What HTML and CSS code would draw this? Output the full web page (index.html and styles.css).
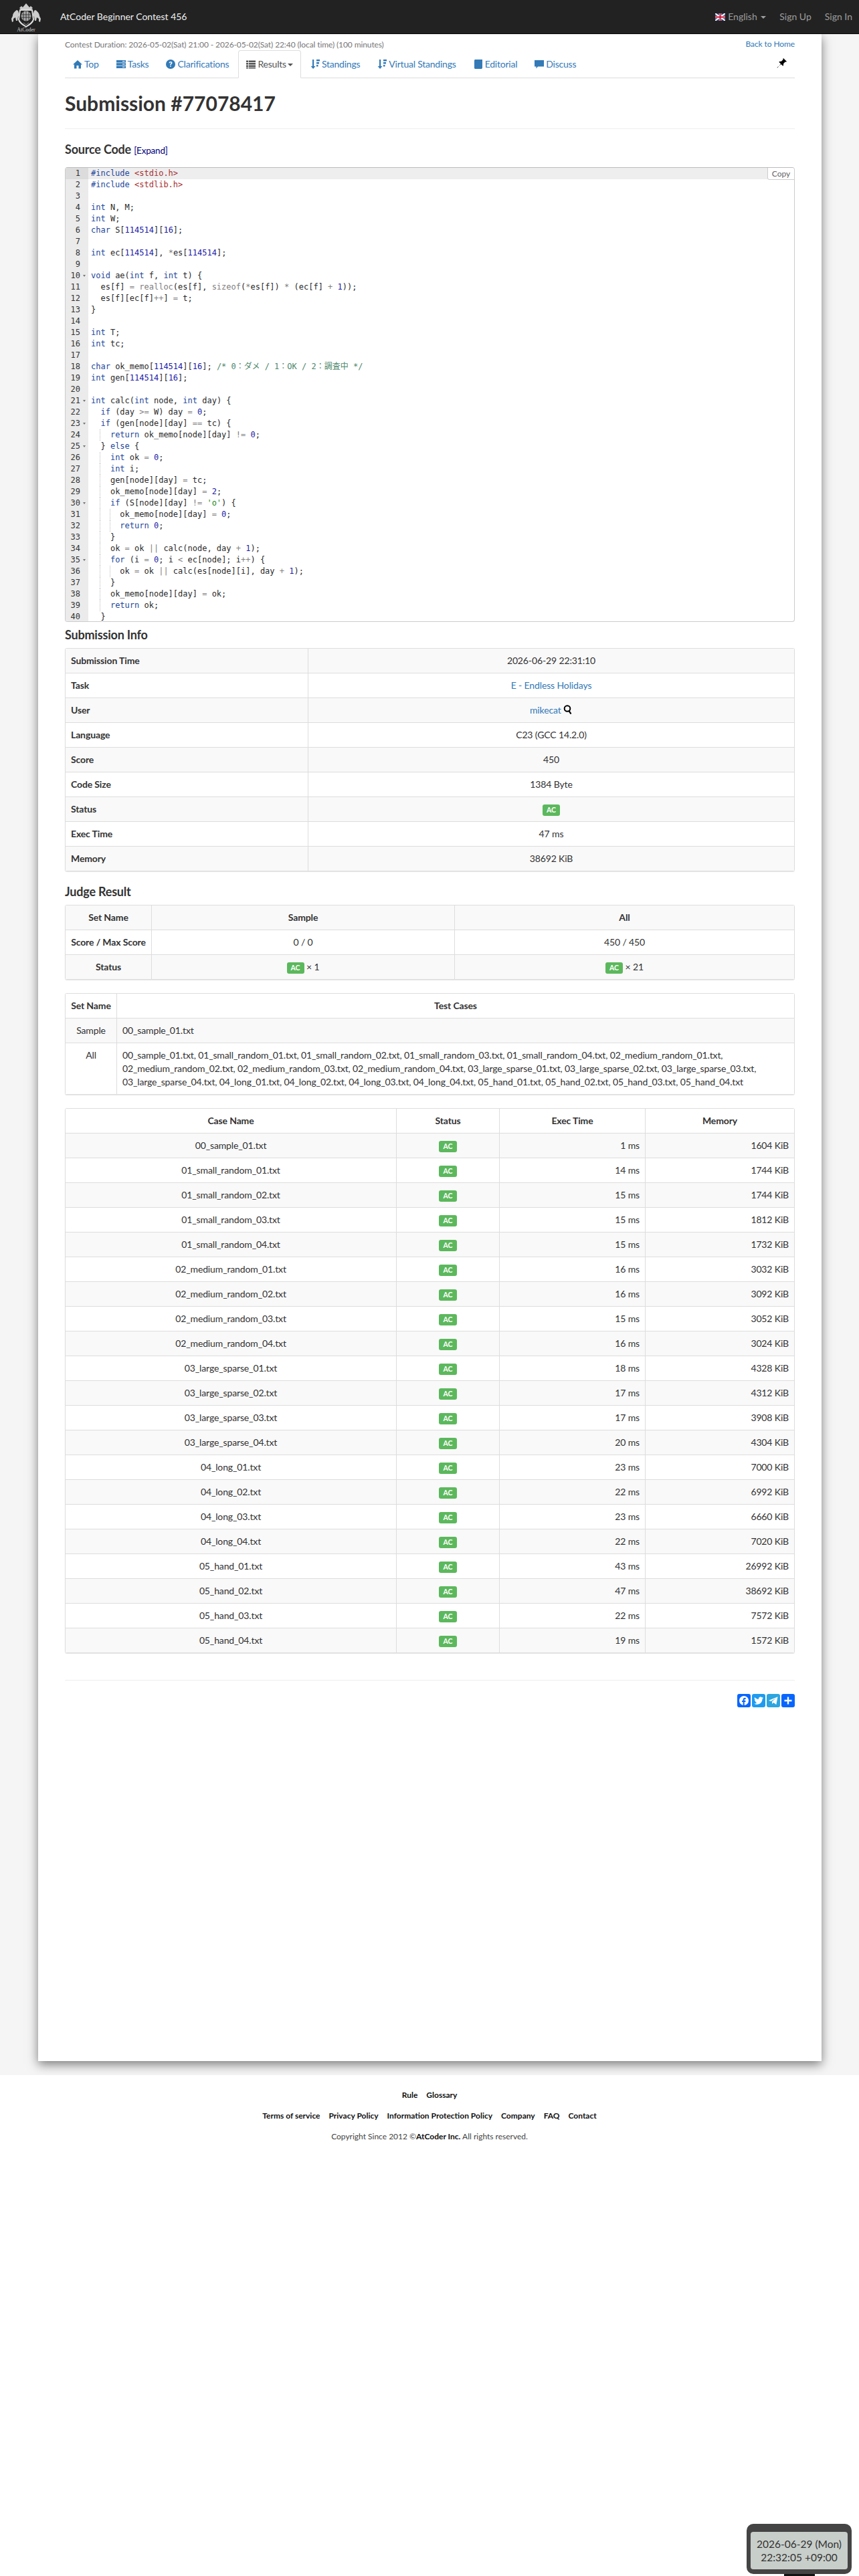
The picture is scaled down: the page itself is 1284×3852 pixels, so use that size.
FILE: index.html
```html
<!DOCTYPE html>
<html lang="en">
<head>
    <meta charset="UTF-8">
    <meta name="viewport" content="width=device-width, initial-scale=1.0">
    <title>Submission #77078417 - AtCoder Beginner Contest 456</title>
    <link rel="stylesheet" href="styles.css">
</head>
<body>
    <nav class="navbar">
        <a class="brand-logo" href="#">
            <svg width="52" height="48" viewBox="0 0 52 48">
                <path d="M16 11l3-3 2 2 5-6 5 6 2-2 3 3-3 3H19z" fill="#ccc"/>
                <path d="M17 14h18l2 14c-1 5-6 8-11 11-5-3-10-6-11-11z" fill="#222" stroke="#ddd" stroke-width="2"/>
                <circle cx="26" cy="23" r="7.5" fill="#aaa"/>
                <path d="M19 21h14M19 25h14M26 15.500v15M22 16.500v13M30 16.500v13" stroke="#222" stroke-width=".8" fill="none"/>
                <path d="M22 33l4 3 4-3" stroke="#888" fill="none"/>
                <path d="M12 14c-3 2-6 5-6 9l-2 4 1 5 2-1 0-4 3-2 1 5 2 0 1-6 2-2-2-7z" fill="#ccc"/>
                <path d="M40 14c3 2 6 5 6 9l2 4-1 5-2-1 0-4-3-2-1 5-2 0-1-6-2-2 2-7z" fill="#ccc"/>
                <text x="26" y="46" class="logo-text" text-anchor="middle">AtCoder</text>
            </svg>
        </a>
        <a class="contest-title" href="#">AtCoder Beginner Contest 456</a>
        <ul class="nav-right">
            <li>
                <svg class="flag" width="15" height="11" viewBox="0 0 15 11">
                    <rect width="15" height="11" fill="#2a3b7c"/>
                    <path d="M0 0l15 11M15 0L0 11" stroke="#fff" stroke-width="2"/>
                    <path d="M7.500 0v11M0 5.500h15" stroke="#fff" stroke-width="3.500"/>
                    <path d="M7.500 0v11M0 5.500h15" stroke="#c8102e" stroke-width="2"/>
                </svg>
                English <span class="caret"></span>
            </li>
            <li>Sign Up</li>
            <li>Sign In</li>
        </ul>
    </nav>

    <div class="page-wrap">
        <main class="container">
            <div class="top-line">
                <a class="back-home" href="#">Back to Home</a>
                <small class="duration">Contest Duration: 2026-05-02(Sat) 21:00 - 2026-05-02(Sat) 22:40 (local time) (100 minutes)</small>
            </div>

            <ul class="nav-tabs">
                <li><a href="#"><svg class="ico" viewBox="0 0 14 14"><path d="M7 1L0 7.600h2V13.500h3.500V9h3v4.500H12V7.600h2z"/></svg>Top</a></li>
                <li><a href="#"><svg class="ico" viewBox="0 0 14 14"><path d="M0 1h14v3.500H0zM0 5.300h14v3.400H0zM0 9.500h14V13H0z"/><path d="M9 2.700h3.500M9 7h3.500M9 11.200h3.500" stroke="#fff"/></svg>Tasks</a></li>
                <li><a href="#"><svg class="ico" viewBox="0 0 14 14"><circle cx="7" cy="7" r="7"/><path d="M4.600 5.200C4.700 3.800 5.800 3 7.100 3c1.400 0 2.400.9 2.400 2.100 0 1.800-1.800 1.700-1.800 3.200H6.100c0-2.200 1.700-2.100 1.700-3.200 0-.5-.3-.8-.8-.8-.5 0-.8.400-.9.900zM6.100 9.200h1.600v1.600H6.100z" fill="#fff"/></svg>Clarifications</a></li>
                <li class="active"><a href="#"><svg class="ico" viewBox="0 0 14 14"><path d="M0 1.500h3v2.500H0zM3.800 1.500H14v2.500H3.800zM0 5h3v2.500H0zM3.800 5H14v2.500H3.800zM0 8.500h3V11H0zM3.800 8.500H14V11H3.800zM0 11.800h3v1.700H0zM3.800 11.800H14v1.700H3.800z"/></svg>Results<span class="caret"></span></a></li>
                <li><a href="#"><svg class="ico" viewBox="0 0 14 14"><path d="M3 0h2.200v10H7.500l-3.400 4L.7 10H3zM9 0h5v2.500H9zM9 4h4v2.500H9zM9 8h2.500v2.500H9z"/></svg>Standings</a></li>
                <li><a href="#"><svg class="ico" viewBox="0 0 14 14"><path d="M3 0h2.200v10H7.500l-3.400 4L.7 10H3zM9 0h5v2.500H9zM9 4h4v2.500H9zM9 8h2.500v2.500H9z"/></svg>Virtual Standings</a></li>
                <li><a href="#"><svg class="ico" viewBox="0 0 14 14"><path d="M2.500 0H13v12.500l-1 1.500H2.500c-1 0-1.500-.7-1.500-1.500v-11C1 .7 1.500 0 2.500 0z"/></svg>Editorial</a></li>
                <li><a href="#"><svg class="ico" viewBox="0 0 14 14"><path d="M0 1h14v9.500H5L2.500 13.500V10.500H0z"/></svg>Discuss</a></li>
                <li class="pin">
                    <svg width="16" height="16" viewBox="0 0 16 16"><path d="M10 0l5 5-1.300.8-.8-.5-3 3.200c.5 1.300.2 2.300-.6 3.200L6 8.400 1 14.500l-.5-.5L6.600 9 3.300 5.700c.9-.8 1.900-1.100 3.200-.6l3.200-3-.5-.8z" fill="#000"/></svg>
                </li>
            </ul>

            <h1 class="page-title">Submission #77078417</h1>
            <hr>

            <h3 class="section-title">Source Code <a class="expand" href="#">[Expand]</a></h3>
            <div class="code-box">
                <button class="copy-btn">Copy</button>
                <div class="gutter">
                    <div class="active-num">1</div><div>2</div><div>3</div><div>4</div><div>5</div><div>6</div><div>7</div><div>8</div><div>9</div>
                    <div class="fold">10</div><div>11</div><div>12</div><div>13</div><div>14</div><div>15</div><div>16</div><div>17</div><div>18</div><div>19</div><div>20</div>
                    <div class="fold">21</div><div>22</div><div class="fold">23</div><div>24</div><div class="fold">25</div><div>26</div><div>27</div><div>28</div><div>29</div>
                    <div class="fold">30</div><div>31</div><div>32</div><div>33</div><div>34</div><div class="fold">35</div><div>36</div><div>37</div><div>38</div><div>39</div><div>40</div>
                </div>
<pre class="code"><div class="active-line"><b>#include</b> <u>&lt;stdio.h&gt;</u></div><div><b>#include</b> <u>&lt;stdlib.h&gt;</u></div><div> </div><div><b>int</b> N, M;</div><div><b>int</b> W;</div><div><b>char</b> S[<i>114514</i>][<i>16</i>];</div><div> </div><div><b>int</b> ec[<i>114514</i>], <s>*</s>es[<i>114514</i>];</div><div> </div><div><b>void</b> ae(<b>int</b> f, <b>int</b> t) {</div><div>  es[f] <s>=</s> <s>realloc</s>(es[f], <s>sizeof</s>(<s>*</s>es[f]) <s>*</s> (ec[f] <s>+</s> <i>1</i>));</div><div>  es[f][ec[f]<s>++</s>] <s>=</s> t;</div><div>}</div><div> </div><div><b>int</b> T;</div><div><b>int</b> tc;</div><div> </div><div><b>char</b> ok_memo[<i>114514</i>][<i>16</i>]; <em>/* 0：ダメ / 1：OK / 2：調査中 */</em></div><div><b>int</b> gen[<i>114514</i>][<i>16</i>];</div><div> </div><div><b>int</b> calc(<b>int</b> node, <b>int</b> day) {</div><div>  <b>if</b> (day <s>&gt;=</s> W) day <s>=</s> <i>0</i>;</div><div>  <b>if</b> (gen[node][day] <s>==</s> tc) {</div><div><span class="guide">  </span>  <b>return</b> ok_memo[node][day] <s>!=</s> <i>0</i>;</div><div>  } <b>else</b> {</div><div><span class="guide">  </span>  <b>int</b> ok <s>=</s> <i>0</i>;</div><div><span class="guide">  </span>  <b>int</b> i;</div><div><span class="guide">  </span>  gen[node][day] <s>=</s> tc;</div><div><span class="guide">  </span>  ok_memo[node][day] <s>=</s> <i>2</i>;</div><div><span class="guide">  </span>  <b>if</b> (S[node][day] <s>!=</s> <tt>'o'</tt>) {</div><div><span class="guide">  </span><span class="guide">  </span>  ok_memo[node][day] <s>=</s> <i>0</i>;</div><div><span class="guide">  </span><span class="guide">  </span>  <b>return</b> <i>0</i>;</div><div><span class="guide">  </span>  }</div><div><span class="guide">  </span>  ok <s>=</s> ok <s>||</s> calc(node, day <s>+</s> <i>1</i>);</div><div><span class="guide">  </span>  <b>for</b> (i <s>=</s> <i>0</i>; i <s>&lt;</s> ec[node]; i<s>++</s>) {</div><div><span class="guide">  </span><span class="guide">  </span>  ok <s>=</s> ok <s>||</s> calc(es[node][i], day <s>+</s> <i>1</i>);</div><div><span class="guide">  </span>  }</div><div><span class="guide">  </span>  ok_memo[node][day] <s>=</s> ok;</div><div><span class="guide">  </span>  <b>return</b> ok;</div><div>  }</div></pre>
            </div>

            <h3 class="section-title info-title">Submission Info</h3>
            <div class="panel">
                <table class="table info-table">
                    <tr><th>Submission Time</th><td>2026-06-29 22:31:10</td></tr>
                    <tr><th>Task</th><td><a href="#">E - Endless Holidays</a></td></tr>
                    <tr><th>User</th><td><a href="#">mikecat</a> <svg class="search" width="14" height="14" viewBox="0 0 14 14"><circle cx="6" cy="5.500" r="4.300" fill="none" stroke="#000" stroke-width="2"/><path d="M8.500 9l3 4.500" stroke="#000" stroke-width="2.200"/></svg></td></tr>
                    <tr><th>Language</th><td>C23 (GCC 14.2.0)</td></tr>
                    <tr><th>Score</th><td>450</td></tr>
                    <tr><th>Code Size</th><td>1384 Byte</td></tr>
                    <tr><th>Status</th><td><span class="label">AC</span></td></tr>
                    <tr><th>Exec Time</th><td>47 ms</td></tr>
                    <tr><th>Memory</th><td>38692 KiB</td></tr>
                </table>
            </div>

            <h3 class="section-title judge-title">Judge Result</h3>
            <div class="panel">
                <table class="table judge-table">
                    <tr><th>Set Name</th><th>Sample</th><th>All</th></tr>
                    <tr><th>Score / Max Score</th><td>0 / 0</td><td>450 / 450</td></tr>
                    <tr><th>Status</th><td><span class="label">AC</span> × 1</td><td><span class="label">AC</span> × 21</td></tr>
                </table>
            </div>
            <div class="panel">
                <table class="table sets-table">
                    <thead><tr><th>Set Name</th><th>Test Cases</th></tr></thead>
                    <tbody>
                        <tr><td>Sample</td><td>00_sample_01.txt</td></tr>
                        <tr><td>All</td><td>00_sample_01.txt, 01_small_random_01.txt, 01_small_random_02.txt, 01_small_random_03.txt, 01_small_random_04.txt, 02_medium_random_01.txt, 02_medium_random_02.txt, 02_medium_random_03.txt, 02_medium_random_04.txt, 03_large_sparse_01.txt, 03_large_sparse_02.txt, 03_large_sparse_03.txt, 03_large_sparse_04.txt, 04_long_01.txt, 04_long_02.txt, 04_long_03.txt, 04_long_04.txt, 05_hand_01.txt, 05_hand_02.txt, 05_hand_03.txt, 05_hand_04.txt</td></tr>
                    </tbody>
                </table>
            </div>
            <div class="panel">
                <table class="table cases-table">
                    <thead><tr><th>Case Name</th><th>Status</th><th>Exec Time</th><th>Memory</th></tr></thead>
                    <tbody>
                        <tr><td>00_sample_01.txt</td><td><span class="label">AC</span></td><td>1 ms</td><td>1604 KiB</td></tr>
                        <tr><td>01_small_random_01.txt</td><td><span class="label">AC</span></td><td>14 ms</td><td>1744 KiB</td></tr>
                        <tr><td>01_small_random_02.txt</td><td><span class="label">AC</span></td><td>15 ms</td><td>1744 KiB</td></tr>
                        <tr><td>01_small_random_03.txt</td><td><span class="label">AC</span></td><td>15 ms</td><td>1812 KiB</td></tr>
                        <tr><td>01_small_random_04.txt</td><td><span class="label">AC</span></td><td>15 ms</td><td>1732 KiB</td></tr>
                        <tr><td>02_medium_random_01.txt</td><td><span class="label">AC</span></td><td>16 ms</td><td>3032 KiB</td></tr>
                        <tr><td>02_medium_random_02.txt</td><td><span class="label">AC</span></td><td>16 ms</td><td>3092 KiB</td></tr>
                        <tr><td>02_medium_random_03.txt</td><td><span class="label">AC</span></td><td>15 ms</td><td>3052 KiB</td></tr>
                        <tr><td>02_medium_random_04.txt</td><td><span class="label">AC</span></td><td>16 ms</td><td>3024 KiB</td></tr>
                        <tr><td>03_large_sparse_01.txt</td><td><span class="label">AC</span></td><td>18 ms</td><td>4328 KiB</td></tr>
                        <tr><td>03_large_sparse_02.txt</td><td><span class="label">AC</span></td><td>17 ms</td><td>4312 KiB</td></tr>
                        <tr><td>03_large_sparse_03.txt</td><td><span class="label">AC</span></td><td>17 ms</td><td>3908 KiB</td></tr>
                        <tr><td>03_large_sparse_04.txt</td><td><span class="label">AC</span></td><td>20 ms</td><td>4304 KiB</td></tr>
                        <tr><td>04_long_01.txt</td><td><span class="label">AC</span></td><td>23 ms</td><td>7000 KiB</td></tr>
                        <tr><td>04_long_02.txt</td><td><span class="label">AC</span></td><td>22 ms</td><td>6992 KiB</td></tr>
                        <tr><td>04_long_03.txt</td><td><span class="label">AC</span></td><td>23 ms</td><td>6660 KiB</td></tr>
                        <tr><td>04_long_04.txt</td><td><span class="label">AC</span></td><td>22 ms</td><td>7020 KiB</td></tr>
                        <tr><td>05_hand_01.txt</td><td><span class="label">AC</span></td><td>43 ms</td><td>26992 KiB</td></tr>
                        <tr><td>05_hand_02.txt</td><td><span class="label">AC</span></td><td>47 ms</td><td>38692 KiB</td></tr>
                        <tr><td>05_hand_03.txt</td><td><span class="label">AC</span></td><td>22 ms</td><td>7572 KiB</td></tr>
                        <tr><td>05_hand_04.txt</td><td><span class="label">AC</span></td><td>19 ms</td><td>1572 KiB</td></tr>
                    </tbody>
                </table>
            </div>

            <hr class="bottom-rule">

            <div class="share">
                <a class="share-btn fb" href="#"><svg width="20" height="20" viewBox="0 0 20 20"><circle cx="10" cy="10" r="7" fill="#fff"/><path d="M8.700 17v-5H7v-2h1.700V8.500c0-1.800 1-2.700 2.600-2.700l1.500.1v1.800h-1c-.8 0-1.100.5-1.100 1V10h1.900l-.3 2h-1.600v5z" fill="#0866ff"/></svg></a>
                <a class="share-btn tw" href="#"><svg width="20" height="20" viewBox="0 0 20 20"><path d="M17 5.700c-.5.200-1 .4-1.600.5.600-.4 1-.9 1.200-1.600-.5.300-1.100.6-1.800.7a2.800 2.800 0 0 0-4.800 2.600C7.700 7.800 5.600 6.700 4.200 5a2.800 2.800 0 0 0 .9 3.800c-.5 0-.9-.1-1.300-.4 0 1.400 1 2.600 2.300 2.800-.4.100-.9.100-1.300 0 .4 1.100 1.400 1.900 2.600 2a5.700 5.700 0 0 1-4.200 1.200c1.300.8 2.700 1.300 4.300 1.300 5.200 0 8.200-4.400 8-8.300.6-.4 1.100-1 1.500-1.700z" fill="#fff"/></svg></a>
                <a class="share-btn tg" href="#"><svg width="20" height="20" viewBox="0 0 20 20"><path d="M3 9.700L16.500 4.300 14.300 16l-4-3-2.100 2-.3-3.500 6-5.300-7.600 4.700z" fill="#fff"/></svg></a>
                <a class="share-btn plus" href="#"><svg width="20" height="20" viewBox="0 0 20 20"><path d="M8.800 4.500h2.400v4.300h4.300v2.400h-4.300v4.300H8.800v-4.300H4.500V8.800h4.300z" fill="#fff"/></svg></a>
            </div>
        </main>
    </div>

    <footer class="footer">
        <ul class="footer-links">
            <li><a href="#">Rule</a></li>
            <li><a href="#">Glossary</a></li>
        </ul>
        <ul class="footer-links">
            <li><a href="#">Terms of service</a></li>
            <li><a href="#">Privacy Policy</a></li>
            <li><a href="#">Information Protection Policy</a></li>
            <li><a href="#">Company</a></li>
            <li><a href="#">FAQ</a></li>
            <li><a href="#">Contact</a></li>
        </ul>
        <p class="copyright">Copyright Since 2012 ©<a href="#">AtCoder Inc.</a> All rights reserved.</p>
    </footer>

    <div class="clock">
        <div class="clock-face">2026-06-29 (Mon)<br>22:32:05 +09:00</div>
        <div class="clock-stand"></div>
    </div>
</body>
</html>
```
FILE: styles.css
```css
* {
    box-sizing: border-box;
}
body {
    position: relative;
    min-height: 3852px;
    margin: 0;
    background-color: #ffffff;
    color: #333333;
    font-family: Lato, "Noto Sans CJK JP", sans-serif;
    font-size: 14px;
    line-height: 20px;
}
a {
    color: #337ab7;
    text-decoration: none;
}
ul {
    margin: 0;
    padding: 0;
    list-style: none;
}
hr {
    margin: 18px 0 20px;
    border: none;
    border-top: 1px solid #eeeeee;
}

/* top bar */
.navbar {
    display: flex;
    align-items: center;
    height: 51px;
    padding-left: 13px;
    background-color: #222222;
    border-bottom: 1px solid #080808;
}
.brand-logo {
    display: block;
    width: 52px;
    height: 48px;
}
.logo-text {
    fill: #cccccc;
    font-family: "Liberation Serif", serif;
    font-size: 8px;
}
.contest-title {
    margin-left: 25px;
    color: #eeeeee;
}
.nav-right {
    display: flex;
    gap: 20px;
    margin-left: auto;
    padding-right: 10px;
    color: #9d9d9d;
}
.flag {
    margin-right: 1px;
    vertical-align: -1px;
}
.caret {
    display: inline-block;
    width: 0;
    height: 0;
    margin-left: 2px;
    vertical-align: middle;
    border-top: 4px solid;
    border-right: 4px solid transparent;
    border-left: 4px solid transparent;
}

/* main column */
.page-wrap {
    height: 3052px;
    background-color: #f5f5f5;
    overflow: hidden;
}
.container {
    width: 1171px;
    height: 3031px;
    margin-left: 57px;
    padding: 7px 40px 0;
    background-color: #ffffff;
    box-shadow: 0 5px 15px rgba(0, 0, 0, 0.5);
}
.top-line {
    height: 17px;
    font-size: 12px;
    line-height: 17px;
}
.duration {
    color: #777777;
    font-size: 12px;
    letter-spacing: -0.1px;
}
.back-home {
    float: right;
    margin-top: -1px;
    letter-spacing: -0.1px;
}

/* tabs */
.nav-tabs {
    display: flex;
    height: 42px;
    margin-top: 0;
    border-bottom: 1px solid #dddddd;
    letter-spacing: -0.22px;
}
.nav-tabs li {
    margin-right: 2px;
}
.nav-tabs a {
    display: block;
    height: 42px;
    padding: 11px 11px 10px;
    border: 1px solid transparent;
    border-width: 0 1px;
}
.nav-tabs a .caret {
    margin-left: 2px;
}
.nav-tabs .active a {
    padding-top: 10px;
    color: #555555;
    background-color: #ffffff;
    border: 1px solid #dddddd;
    border-bottom-color: transparent;
    border-radius: 4px 4px 0 0;
}
.nav-tabs .pin {
    margin: 12px 11px 0 auto;
}
.ico {
    width: 14px;
    height: 14px;
    margin-right: 3px;
    fill: currentColor;
    vertical-align: -2px;
}

/* headings */
.page-title {
    margin: 17px 0 0;
    font-size: 30px;
    font-weight: 700;
    line-height: 40px;
}
.section-title {
    margin: 0;
    font-size: 18px;
    font-weight: 700;
    line-height: 20px;
    letter-spacing: -0.2px;
}
.expand {
    color: #000080;
    font-size: 13.500px;
    font-weight: 400;
}

/* source code */
.code-box {
    position: relative;
    display: flex;
    height: 680px;
    margin-top: 15px;
    overflow: hidden;
    border: 1px solid #cccccc;
    border-top-color: #bbbbbb;
    border-radius: 4px;
}
.gutter {
    flex: none;
    width: 34px;
    padding-right: 12px;
    background-color: #ebebeb;
    color: #333333;
    font-family: "DejaVu Sans Mono", monospace;
    font-size: 12px;
    line-height: 17px;
    text-align: right;
}
.gutter div {
    position: relative;
    margin-right: -12px;
    padding-right: 12px;
}
.active-num {
    background-color: #dcdcdc;
}
.gutter .fold::after {
    content: "";
    position: absolute;
    top: 7px;
    right: 4px;
    border-top: 3px solid #777777;
    border-right: 2.500px solid transparent;
    border-left: 2.500px solid transparent;
}
.code {
    flex: 1;
    margin: 0;
    color: #2b2b2b;
    font-family: "DejaVu Sans Mono", "Noto Sans CJK JP", monospace;
    font-size: 12px;
    line-height: 17px;
}
.code div {
    height: 17px;
    padding-left: 4px;
}
.code .active-line {
    background-color: #eeeeee;
}
.code b {
    color: #24489c;
    font-weight: 400;
}
.code i {
    color: #1c1ca8;
    font-style: normal;
}
.code u {
    color: #a83232;
    text-decoration: none;
}
.code s {
    color: #808080;
    text-decoration: none;
}
.code em {
    color: #4c886b;
    font-style: normal;
}
.code tt {
    color: #1a8a1a;
    font-family: inherit;
}
.guide {
    display: inline-block;
    height: 17px;
    background-image: linear-gradient(#bbbbbb 50%, transparent 50%);
    background-size: 1px 2px;
    background-repeat: repeat-y;
    background-position: right top;
    vertical-align: top;
}
.copy-btn {
    position: absolute;
    top: -1px;
    right: -1px;
    z-index: 2;
    width: 41px;
    height: 19px;
    padding: 0;
    background-color: #ffffff;
    border: 1px solid #cccccc;
    border-radius: 0 3px 0 3px;
    color: #666666;
    font-family: inherit;
    font-size: 12px;
}

/* tables */
.info-title {
    margin-top: 9px;
}
.judge-title {
    margin-top: 20px;
}
.panel {
    margin: 10px 0 20px;
    overflow: hidden;
    border-radius: 3px;
    box-shadow: 0 1px 1px rgba(0, 0, 0, 0.1);
}
.panel + .panel {
    margin-top: 0;
}
.table {
    width: 100%;
    border-collapse: collapse;
    table-layout: fixed;
    letter-spacing: -0.13px;
}
.table th,
.table td {
    padding: 8px;
    border: 1px solid #dddddd;
    text-align: center;
    vertical-align: top;
    font-weight: 400;
}
.table th {
    font-weight: 700;
    white-space: nowrap;
}
.info-table tr:nth-child(odd),
.judge-table tr:nth-child(odd),
.sets-table tbody tr:nth-child(odd),
.cases-table tbody tr:nth-child(odd) {
    background-color: #f9f9f9;
}
.info-table th {
    width: 363px;
    text-align: left;
}
.judge-table th:first-child {
    width: 129px;
}
.judge-table tr:first-child th:nth-child(2) {
    width: 453px;
}
.sets-table th:first-child {
    width: 77px;
}
.sets-table td:nth-child(2) {
    text-align: left;
}
.cases-table th:nth-child(1) {
    width: 495px;
}
.cases-table th:nth-child(2) {
    width: 154px;
}
.cases-table th:nth-child(3) {
    width: 218px;
}
.cases-table td:nth-child(3),
.cases-table td:nth-child(4) {
    text-align: right;
}
.label {
    display: inline-block;
    padding: 3px 6px 4px;
    background-color: #5cb85c;
    border-radius: 3px;
    color: #ffffff;
    font-size: 10.500px;
    font-weight: 700;
    line-height: 10px;
    letter-spacing: 0;
    vertical-align: 0;
}
.search {
    vertical-align: -1px;
}

/* share buttons */
.bottom-rule {
    margin: 40px 0 20px;
}
.share {
    display: flex;
    justify-content: flex-end;
    gap: 2px;
}
.share-btn {
    display: block;
    width: 20px;
    height: 20px;
    border-radius: 3px;
}
.share-btn svg {
    display: block;
}
.fb,
.plus {
    background-color: #0866ff;
}
.tw {
    background-color: #1d9bf0;
}
.tg {
    background-color: #2ca5e0;
}

/* footer */
.footer {
    padding-top: 21px;
    font-size: 12px;
    line-height: 17px;
    text-align: center;
}
.footer-links {
    display: flex;
    justify-content: center;
    gap: 13px;
    margin-bottom: 14px;
    font-weight: 700;
}
.footer a {
    color: #111111;
}
.copyright {
    margin: 0;
    color: #444444;
}
.copyright a {
    font-weight: 700;
}

/* clock */
.clock {
    position: absolute;
    top: 3774px;
    left: 1116px;
    width: 157px;
    height: 75px;
    padding: 12px 6px 7px;
    background-color: #444444;
    border-radius: 10px;
}
.clock-face {
    height: 56px;
    padding-top: 8px;
    background-color: #c8ceca;
    border-radius: 4px;
    color: #333333;
    font-size: 15.500px;
    line-height: 20px;
    text-align: center;
}
.clock-stand {
    position: absolute;
    bottom: -3px;
    left: 56px;
    width: 46px;
    height: 3px;
    background-color: #111111;
}
```
